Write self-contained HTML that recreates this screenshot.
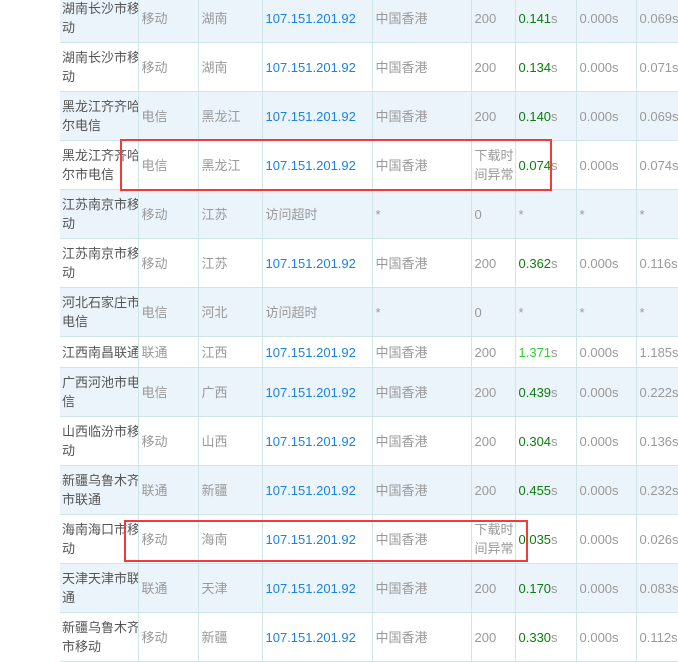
<!DOCTYPE html>
<html><head><meta charset="utf-8"><style>
body{margin:0;width:678px;height:636px;overflow:hidden;background:#fff;position:relative;font-family:"Liberation Sans","Noto Sans CJK SC",sans-serif;font-size:13px;color:#999}
table{position:absolute;left:60px;top:-7px;border-collapse:collapse;table-layout:fixed;width:660px}
td{border:1px solid #cfe6e6;padding:0 0 0 3px;vertical-align:middle;line-height:19px;white-space:nowrap;overflow:hidden}
td:first-child{color:#555;padding-left:2px;border-left:none}
tr{height:49px}
tr.b{background:#ebf4fb}
tr.s{height:31px}
.ip{color:#1a82e2}
.g{color:#0a7d0a}
.lg{color:#3c3}
.g span,.lg span{color:#999}
.box{position:absolute;border:2px solid #f23a3a}
</style></head><body>
<table>
<col style="width:78px"><col style="width:60px"><col style="width:64px"><col style="width:110px"><col style="width:99px"><col style="width:44px"><col style="width:61px"><col style="width:60px"><col style="width:84px">
<tr class="b"><td>湖南长沙市移<br>动</td><td>移动</td><td>湖南</td><td class="ip">107.151.201.92</td><td>中国香港</td><td>200</td><td class="g">0.141<span>s</span></td><td>0.000s</td><td>0.069s</td></tr>
<tr><td>湖南长沙市移<br>动</td><td>移动</td><td>湖南</td><td class="ip">107.151.201.92</td><td>中国香港</td><td>200</td><td class="g">0.134<span>s</span></td><td>0.000s</td><td>0.071s</td></tr>
<tr class="b"><td>黑龙江齐齐哈<br>尔电信</td><td>电信</td><td>黑龙江</td><td class="ip">107.151.201.92</td><td>中国香港</td><td>200</td><td class="g">0.140<span>s</span></td><td>0.000s</td><td>0.069s</td></tr>
<tr><td>黑龙江齐齐哈<br>尔市电信</td><td>电信</td><td>黑龙江</td><td class="ip">107.151.201.92</td><td>中国香港</td><td>下载时<br>间异常</td><td class="g">0.074<span>s</span></td><td>0.000s</td><td>0.074s</td></tr>
<tr class="b"><td>江苏南京市移<br>动</td><td>移动</td><td>江苏</td><td>访问超时</td><td>*</td><td>0</td><td>*</td><td>*</td><td>*</td></tr>
<tr><td>江苏南京市移<br>动</td><td>移动</td><td>江苏</td><td class="ip">107.151.201.92</td><td>中国香港</td><td>200</td><td class="g">0.362<span>s</span></td><td>0.000s</td><td>0.116s</td></tr>
<tr class="b"><td>河北石家庄市<br>电信</td><td>电信</td><td>河北</td><td>访问超时</td><td>*</td><td>0</td><td>*</td><td>*</td><td>*</td></tr>
<tr class="s"><td>江西南昌联通</td><td>联通</td><td>江西</td><td class="ip">107.151.201.92</td><td>中国香港</td><td>200</td><td class="lg">1.371<span>s</span></td><td>0.000s</td><td>1.185s</td></tr>
<tr class="b"><td>广西河池市电<br>信</td><td>电信</td><td>广西</td><td class="ip">107.151.201.92</td><td>中国香港</td><td>200</td><td class="g">0.439<span>s</span></td><td>0.000s</td><td>0.222s</td></tr>
<tr><td>山西临汾市移<br>动</td><td>移动</td><td>山西</td><td class="ip">107.151.201.92</td><td>中国香港</td><td>200</td><td class="g">0.304<span>s</span></td><td>0.000s</td><td>0.136s</td></tr>
<tr class="b"><td>新疆乌鲁木齐<br>市联通</td><td>联通</td><td>新疆</td><td class="ip">107.151.201.92</td><td>中国香港</td><td>200</td><td class="g">0.455<span>s</span></td><td>0.000s</td><td>0.232s</td></tr>
<tr><td>海南海口市移<br>动</td><td>移动</td><td>海南</td><td class="ip">107.151.201.92</td><td>中国香港</td><td>下载时<br>间异常</td><td class="g">0.035<span>s</span></td><td>0.000s</td><td>0.026s</td></tr>
<tr class="b"><td>天津天津市联<br>通</td><td>联通</td><td>天津</td><td class="ip">107.151.201.92</td><td>中国香港</td><td>200</td><td class="g">0.170<span>s</span></td><td>0.000s</td><td>0.083s</td></tr>
<tr><td>新疆乌鲁木齐<br>市移动</td><td>移动</td><td>新疆</td><td class="ip">107.151.201.92</td><td>中国香港</td><td>200</td><td class="g">0.330<span>s</span></td><td>0.000s</td><td>0.112s</td></tr>
</table>
<div class="box" style="left:120px;top:139px;width:428px;height:48px"></div>
<div class="box" style="left:124px;top:520px;width:400px;height:38px"></div>
</body></html>
